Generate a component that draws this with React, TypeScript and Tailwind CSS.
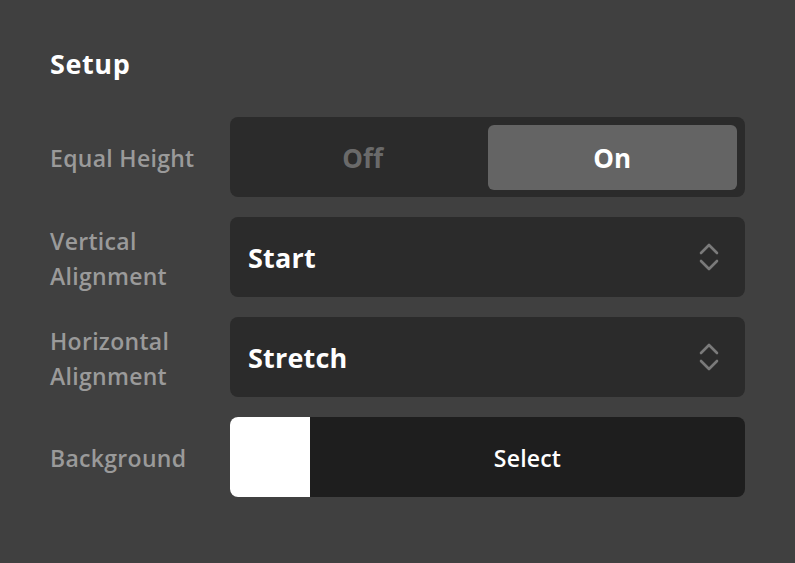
import React from "react";

const FONT = { fontFamily: '"Open Sans", "Noto Sans", sans-serif' };

function Chevrons() {
  return (
    <svg width="22" height="30" viewBox="0 0 22 30" fill="none" stroke="#7a7a7a" strokeWidth="2.6" strokeLinecap="round" strokeLinejoin="round">
      <path d="M3 11 L11 3 L19 11" />
      <path d="M3 19 L11 27 L19 19" />
    </svg>
  );
}

function Row({ label, children }: { label: React.ReactNode; children: React.ReactNode }) {
  return (
    <div className="flex items-center">
      <div className="w-[180px] pt-[3px] text-[23px] font-semibold leading-[35px] tracking-[0.3px] text-[#9a9a9a]">{label}</div>
      <div className="h-[80px] flex-1">{children}</div>
    </div>
  );
}

function SelectBox({ value }: { value: string }) {
  return (
    <div className="flex h-full items-center justify-between rounded-lg bg-[#2b2b2b] pl-[18px] pr-[25px]">
      <span className="pt-[3px] text-[27px] font-bold tracking-[0.2px] text-white">{value}</span>
      <Chevrons />
    </div>
  );
}

export default function App() {
  return (
    <div className="min-h-screen w-full bg-[#404040] px-[50px] pt-[42px]" style={FONT}>
      <h1 className="text-[27px] font-bold leading-[44px] tracking-[0.6px] text-white">Setup</h1>
      <div className="mt-[31px] flex flex-col gap-[20px]">
        <Row label="Equal Height">
          <div className="flex h-full rounded-lg bg-[#2b2b2b] p-[8px] pb-[7px]">
            <div className="flex flex-1 items-center justify-center pt-[2px] text-[26px] font-bold text-[#6a6a6a]">Off</div>
            <div className="flex flex-1 items-center justify-center rounded-md bg-[#646464] pt-[2px] text-[26px] font-bold text-white">On</div>
          </div>
        </Row>
        <Row label={<>Vertical<br />Alignment</>}>
          <SelectBox value="Start" />
        </Row>
        <Row label={<>Horizontal<br />Alignment</>}>
          <SelectBox value="Stretch" />
        </Row>
        <Row label="Background">
          <div className="flex h-full overflow-hidden rounded-lg bg-[#1e1e1e]">
            <div className="w-[80px] bg-white" />
            <div className="flex flex-1 items-center justify-center pt-[2px] text-[23px] font-semibold tracking-[0.2px] text-white">Select</div>
          </div>
        </Row>
      </div>
    </div>
  );
}
